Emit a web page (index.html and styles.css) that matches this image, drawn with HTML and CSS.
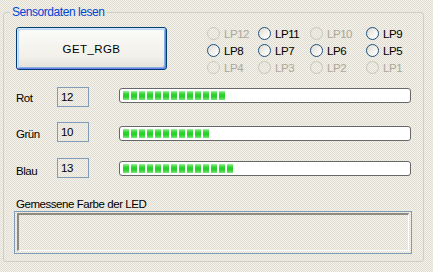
FILE: index.html
```html
<!DOCTYPE html>
<html lang="de">
<head>
<meta charset="utf-8">
<title>Sensordaten lesen</title>
<link rel="stylesheet" href="styles.css">
</head>
<body>
<fieldset class="group">
  <legend class="group-title">Sensordaten lesen</legend>
  <div class="top-row">
    <button class="btn" type="button">GET_RGB</button>
    <div class="radios">
      <span class="radio disabled"><i class="dot"></i>LP12</span>
      <span class="radio"><i class="dot"></i>LP11</span>
      <span class="radio disabled"><i class="dot"></i>LP10</span>
      <span class="radio"><i class="dot"></i>LP9</span>
      <span class="radio"><i class="dot"></i>LP8</span>
      <span class="radio"><i class="dot"></i>LP7</span>
      <span class="radio"><i class="dot"></i>LP6</span>
      <span class="radio"><i class="dot"></i>LP5</span>
      <span class="radio disabled"><i class="dot"></i>LP4</span>
      <span class="radio disabled"><i class="dot"></i>LP3</span>
      <span class="radio disabled"><i class="dot"></i>LP2</span>
      <span class="radio disabled"><i class="dot"></i>LP1</span>
    </div>
  </div>

  <div class="sensor sensor-rot">
    <span class="sensor-label">Rot</span>
    <span class="value">12</span>
    <div class="bar"><div class="fill" style="width:102px"></div></div>
  </div>
  <div class="sensor sensor-gruen">
    <span class="sensor-label">Grün</span>
    <span class="value">10</span>
    <div class="bar"><div class="fill" style="width:86px"></div></div>
  </div>
  <div class="sensor sensor-blau">
    <span class="sensor-label">Blau</span>
    <span class="value">13</span>
    <div class="bar"><div class="fill" style="width:110px"></div></div>
  </div>

  <div class="led-label">Gemessene Farbe der LED</div>
  <div class="led-box"><div class="led-panel"></div></div>
</fieldset>
</body>
</html>
```

FILE: styles.css
```css
html, body {
  margin: 0;
  padding: 0;
}
body {
  width: 433px;
  height: 272px;
  overflow: hidden;
  font-family: "Liberation Sans", Arial, sans-serif;
  font-size: 11.5px;
  letter-spacing: -0.45px;
  color: #000;
  background-color: #ebe9df;
  background-image: repeating-conic-gradient(#f4f2ea 0 25%, #e0ddd2 0 50%);
  background-size: 2px 2px;
}

.group {
  margin: 5px 9px 0 3px;
  padding: 0 0 7px 0;
  border: 1px solid #d0d0bf;
  border-radius: 3px;
  min-width: 0;
}
.group-title {
  margin-left: 6px;
  padding: 0 2px;
  color: #0046d5;
  font-size: 12px;
  line-height: 14px;
}

.top-row {
  display: flex;
  align-items: flex-start;
  margin-top: 6px;
}
.btn {
  margin: 2px 0 0 12px;
  width: 151px;
  height: 43px;
  border: 1px solid #003c74;
  border-radius: 3px;
  background: linear-gradient(#fbfbf9, #f1f0ea 70%, #e3e1d8);
  box-shadow: inset 1px 1px 0 #cee7ff, inset -1px -1px 0 #6982ee, inset 2px 2px 0 #bcd4f6, inset -2px -2px 0 #89ade4;
  font-family: "Liberation Sans", Arial, sans-serif;
  font-size: 11.5px;
  letter-spacing: 0.4px;
  color: #000;
  padding: 0;
}

.radios {
  margin-left: 40px;
  display: grid;
  grid-template-columns: 51px 52px 56px 50px;
  grid-auto-rows: 17px;
}
.radio {
  display: flex;
  align-items: center;
  gap: 4px;
  line-height: 14px;
}
.dot {
  width: 11px;
  height: 11px;
  border: 1px solid #1c5180;
  border-radius: 50%;
  background: linear-gradient(135deg, #dcd9cf, #f4f3ee 55%, #fff);
  flex: none;
}
.radio.disabled {
  color: #aca899;
}
.radio.disabled .dot {
  border-color: #cac8bb;
  background: transparent;
}

.sensor {
  display: flex;
  align-items: flex-start;
  height: 20px;
}
.sensor-rot { margin-top: 11px; }
.sensor-gruen { margin-top: 15px; }
.sensor-blau { margin-top: 16px; }

.sensor-label {
  width: 41px;
  margin-left: 12px;
  line-height: 14px;
}
.sensor-rot .sensor-label { margin-top: 4px; }
.sensor-gruen .sensor-label { margin-top: 5px; }
.sensor-blau .sensor-label { margin-top: 6px; }

.value {
  box-sizing: border-box;
  width: 32px;
  height: 20px;
  border: 1px solid #7f9db9;
  padding: 2px 0 0 3px;
  line-height: 14px;
}

.bar {
  box-sizing: border-box;
  width: 292px;
  height: 15px;
  margin-left: 30px;
  border: 1px solid #686868;
  border-radius: 3px;
  background: #fff;
  padding: 2px 3px;
}
.sensor-rot .bar { margin-top: 1px; }
.sensor-gruen .bar { margin-top: 4px; }
.sensor-blau .bar { margin-top: 3px; }

.fill {
  height: 9px;
  background:
    repeating-linear-gradient(90deg, transparent 0 6px, #fff 6px 8px),
    linear-gradient(#9af29a, #2fd42f 35%, #28cf28 65%, #7ae67a);
}

.led-label {
  margin: 19px 0 0 12px;
  line-height: 14px;
}
.led-box {
  box-sizing: border-box;
  width: 398px;
  height: 43px;
  margin-left: 10px;
  border: 1px solid #7f9db9;
  padding: 1px 2px 2px 2px;
}
.led-panel {
  height: 100%;
  box-sizing: border-box;
  border-top: 2px solid #8e8b7e;
  border-left: 2px solid #8e8b7e;
  border-bottom: 1px solid #fff;
  border-right: 1px solid #fff;
}
```
